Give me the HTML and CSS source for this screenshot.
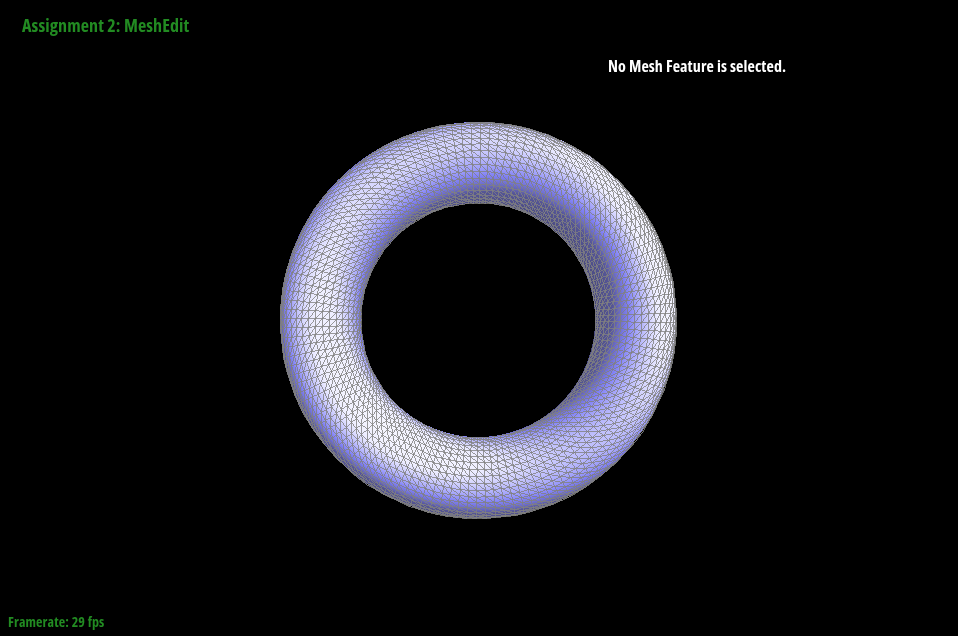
FILE: index.html
```html
<!DOCTYPE html>
<html lang="en">
<head>
<meta charset="utf-8">
<title>Assignment 2: MeshEdit</title>
<link rel="stylesheet" href="styles.css">
</head>
<body>
<main class="viewport">
  <canvas class="scene" id="scene" width="958" height="636"></canvas>
  <div class="label title">Assignment 2: MeshEdit</div>
  <div class="label status">No Mesh Feature is selected.</div>
  <div class="label framerate">Framerate: 29 fps</div>
</main>
<script src="torus.js"></script>
</body>
</html>
```
FILE: styles.css
```css
html, body {
  margin: 0;
  padding: 0;
  background: #000;
  overflow: hidden;
}
.viewport {
  position: relative;
  width: 958px;
  height: 636px;
  background: #000;
  overflow: hidden;
}
.scene {
  display: block;
}
.label {
  position: absolute;
  font-family: "Open Sans", "Noto Sans", sans-serif;
  font-weight: 700;
  font-stretch: 75%;
  white-space: nowrap;
  line-height: 1;
}
.title {
  left: 22px;
  top: 16px;
  font-size: 18px;
  letter-spacing: 0.1px;
  color: #228b22;
}
.status {
  left: 608px;
  top: 58px;
  font-size: 16px;
  letter-spacing: 0.1px;
  color: #fff;
}
.framerate {
  left: 8px;
  top: 615px;
  font-size: 14px;
  letter-spacing: 0.12px;
  color: #228b22;
}
```
FILE: torus.js
```js
(function () {
  var canvas = document.getElementById('scene');
  var ctx = canvas.getContext('2d');
  var W = canvas.width, H = canvas.height;
  var cx = 478, cy = 320, R = 157.5, r = 40.5;

  function mix(a, b, t) { return a + (b - a) * t; }
  var stops = [
    [-1.0, 60, 60, 100],
    [0.10, 85, 85, 150],
    [0.40, 130, 130, 246],
    [0.58, 180, 180, 252],
    [0.76, 238, 238, 255],
    [1.0, 255, 255, 255]
  ];
  function shade(d) {
    for (var i = 1; i < stops.length; i++) {
      if (d <= stops[i][0]) {
        var a = stops[i - 1], b = stops[i];
        var t = (d - a[0]) / (b[0] - a[0]);
        return [mix(a[1], b[1], t), mix(a[2], b[2], t), mix(a[3], b[3], t)];
      }
    }
    return [255, 255, 255];
  }

  var img = ctx.createImageData(W, H);
  var data = img.data;
  for (var y = 0; y < H; y++) {
    for (var x = 0; x < W; x++) {
      var dx = x + 0.5 - cx, dy = y + 0.5 - cy;
      var rho = Math.hypot(dx, dy);
      var t = (rho - R) / r;
      var k = (y * W + x) * 4;
      data[k + 3] = 255;
      if (Math.abs(t) >= 1) continue;
      var nx = t * dx / rho, ny = -t * dy / rho, nz = Math.sqrt(1 - t * t);
      var lx = 0.35 + 0.25 * dx / R;
      var ly = 0.35 - 0.05 * dy / R;
      var lz = 0.64 - 0.14 * dx / R + 0.08 * dy / R;
      var c = shade(nx * lx + ny * ly + nz * lz);
      data[k] = c[0];
      data[k + 1] = c[1];
      data[k + 2] = c[2];
    }
  }

  function plot(px, py) {
    if (px < 0 || py < 0 || px >= W || py >= H) return;
    var k = (py * W + px) * 4;
    for (var c = 0; c < 3; c++) {
      data[k + c] = data[k + c] * 0.2 + 128 * 0.8;
    }
  }
  function line(a, b) {
    var x0 = Math.round(a[0]), y0 = Math.round(a[1]);
    var x1 = Math.round(b[0]), y1 = Math.round(b[1]);
    var sx = x0 < x1 ? 1 : -1, sy = y0 < y1 ? 1 : -1;
    var ex = Math.abs(x1 - x0), ey = -Math.abs(y1 - y0), err = ex + ey;
    for (;;) {
      plot(x0, y0);
      if (x0 === x1 && y0 === y1) break;
      var e2 = 2 * err;
      if (e2 >= ey) { err += ey; x0 += sx; }
      if (e2 <= ex) { err += ex; y0 += sy; }
    }
  }

  var N = 128, M = 36;
  function vertex(i, j) {
    var phi = i / N * Math.PI * 2 + 0.01;
    var psi = (j + 0.2) / M * Math.PI * 2;
    var q = R + r * Math.cos(psi);
    return [cx + q * Math.cos(phi), cy + q * Math.sin(phi), Math.sin(psi)];
  }
  function edge(a, b) {
    if (a[2] < 0 || b[2] < 0) return;
    line(a, b);
  }
  for (var i = 0; i < N; i++) {
    for (var j = 0; j < M; j++) {
      var v = vertex(i, j);
      edge(v, vertex(i + 1, j));
      edge(v, vertex(i, j + 1));
      edge(v, vertex(i + 1, j + 1));
    }
  }
  ctx.putImageData(img, 0, 0);
})();
```
